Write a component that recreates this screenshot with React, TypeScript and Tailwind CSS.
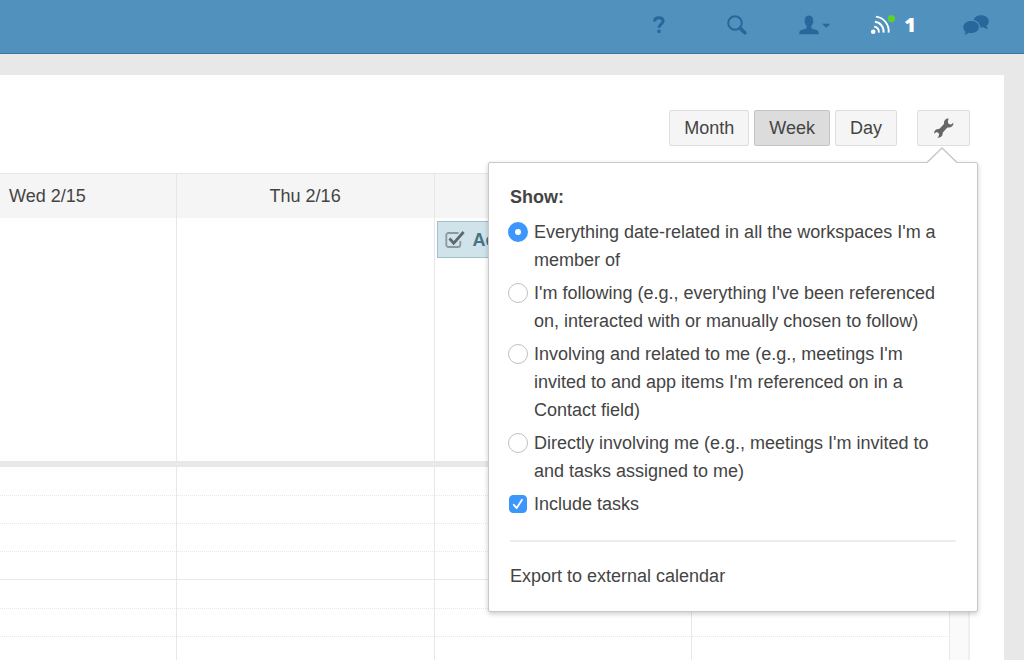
import type { ReactNode } from "react";

const days = [
  { id: "wed", label: "Wed 2/15" },
  { id: "thu", label: "Thu 2/16" },
  { id: "fri", label: "" },
  { id: "sat", label: "" },
];

const hours = [0, 1, 2];

const quarters = [0, 1, 2, 3];

const filters = [
  "Everything date-related in all the workspaces I'm a member of",
  "I'm following (e.g., everything I've been referenced on, interacted with or manually chosen to follow)",
  "Involving and related to me (e.g., meetings I'm invited to and app items I'm referenced on in a Contact field)",
  "Directly involving me (e.g., meetings I'm invited to and tasks assigned to me)",
];

function NavButton({ label, className = "", children }: { label: string; className?: string; children: ReactNode }) {
  return (
    <button aria-label={label} className={`flex w-[78px] items-center justify-center text-[#29679b] ${className}`}>
      {children}
    </button>
  );
}

function TopBar() {
  return (
    <header className="flex h-[54px] shrink-0 items-stretch justify-end border-b border-[#3a759f] bg-[#5191be] pr-[9px] pb-1">
      <NavButton label="Help">
        <svg width="14" height="18" viewBox="0 0 14 18" fill="none">
          <path d="M2.5 5.5C2.7 3 4.3 1.8 6.8 1.8c2.6 0 4.3 1.3 4.3 3.3 0 3.2-4.1 3-4.1 6.6" stroke="currentColor" strokeWidth="3" />
          <rect x="5.3" y="13.7" width="3.4" height="3.2" rx="0.8" fill="currentColor" />
        </svg>
      </NavButton>
      <NavButton label="Search">
        <svg width="20" height="20" viewBox="0 0 20 20" fill="none" stroke="currentColor">
          <circle cx="8" cy="8" r="6.8" strokeWidth="2" />
          <path d="M13.2 13.2l4.6 4.6" strokeWidth="3.6" strokeLinecap="round" />
        </svg>
      </NavButton>
      <NavButton label="Account">
        <svg width="32" height="20" viewBox="0 0 32 20" fill="currentColor">
          <path d="M9.900.5c2.600 0 4.200 1.700 4.200 4.100 0 .7-.1 1-.1 1.400.6.2.5 1.800-.3 2.300-.3 1.400-.8 2.300-1.400 2.900v1.900c.7 1.200 6.100 1.600 7 3.400.4.700.4 1.800.4 2.800H.2c0-1 0-2.100.4-2.800.9-1.800 6.300-2.200 7-3.400v-1.900c-.6-.6-1.100-1.500-1.400-2.900-.8-.5-.9-2.100-.3-2.300 0-.4-.1-.7-.1-1.400C5.800 2.200 7.300.5 9.900.5z" />
          <path d="M23 8.800h8.400l-4.200 4z" />
        </svg>
      </NavButton>
      <NavButton label="Activity, 1 new">
        <span className="flex items-center gap-2 text-white">
          <svg width="26" height="20" viewBox="0 0 26 20" fill="none">
            <circle cx="3.2" cy="16.8" r="2.3" fill="currentColor" />
            <g stroke="currentColor" strokeWidth="1.9">
              <path d="M4.2 11.8a4.8 4.8 0 0 1 4.6 5.8" />
              <path d="M4.9 6.8a9.6 9.6 0 0 1 8.6 10.8" />
              <path d="M5.9 1.6a14.5 14.5 0 0 1 12.7 16" />
            </g>
            <circle cx="21.4" cy="3.6" r="3.6" fill="#5bd12b" />
          </svg>
          <span className="font-['Open_Sans',sans-serif] text-xl leading-5 font-extrabold">1</span>
        </span>
      </NavButton>
      <NavButton label="Messages" className="ml-[5px]">
        <svg width="26" height="20" viewBox="0 0 26 20" fill="currentColor">
          <path d="M18 .3c4.500 0 7.800 2.600 7.800 6 0 1.800-.8 3.300-2.200 4.400.1 1.200.7 2.200 1.600 3-1.800 0-3.400-.5-4.600-1.500-1 .3-2.100.4-3.200.3C17 8.500 14 5.200 10.400 5 11.400 2.200 14.300.3 18 .3z" />
          <path d="M8.200 6c4.500 0 7.800 2.600 7.800 6s-3.300 6.100-7.800 6.100c-1 0-1.900-.1-2.700-.3-.9 1.100-2.200 1.800-3.900 2 .6-.9.9-2 .7-3.300C1 15.400.3 13.900.3 12.100.3 8.600 3.700 6 8.200 6z" />
        </svg>
      </NavButton>
    </header>
  );
}

function ShowMenu() {
  return (
    <div className="absolute top-[52px] -right-2 z-10 w-[490px] rounded-xs border border-[#c8c8c8] bg-white px-[21px] pt-5 pb-[21px] leading-7 shadow-[0_2px_5px_rgba(0,0,0,0.2)]">
      <svg className="absolute -top-4 right-5" width="30" height="17" viewBox="0 0 30 17">
        <path d="M0 17V16L15 1L30 16V17" fill="#fff" />
        <path d="M0 15.5L15 1L30 15.5" fill="none" stroke="#c8c8c8" strokeWidth="1.5" />
      </svg>

      <fieldset>
        <legend className="mb-[7px] font-bold">Show:</legend>
        <div className="-ml-0.5 flex flex-col gap-[5px]">
          {filters.map((text, i) => (
            <label key={text} className="flex gap-1.5">
              <span className="flex h-7 w-5 shrink-0 items-center justify-center">
                <input
                  type="radio"
                  name="show"
                  defaultChecked={i === 0}
                  className="size-5 appearance-none rounded-full border border-[#c0c0c0] bg-white checked:border-[7px] checked:border-[#3b97fc]"
                />
              </span>
              <span>{text}</span>
            </label>
          ))}
          <label className="flex gap-1.5">
            <span className="relative flex h-7 w-5 shrink-0 items-center justify-center">
              <input
                type="checkbox"
                defaultChecked
                className="peer size-[18px] appearance-none rounded-[4px] border border-[#c0c0c0] bg-white checked:border-[#3b97fc] checked:bg-[#3b97fc]"
              />
              <svg
                className="pointer-events-none absolute hidden peer-checked:block"
                width="12"
                height="12"
                viewBox="0 0 12 12"
                fill="none"
                stroke="#fff"
                strokeWidth="1.8"
                strokeLinecap="round"
                strokeLinejoin="round"
              >
                <path d="M1.8 6.8l2.9 3.3L10 1.8" />
              </svg>
            </span>
            <span>Include tasks</span>
          </label>
        </div>
      </fieldset>

      <hr className="mt-[22px] mb-5 border-t-2 border-[#ededed]" />
      <a href="#export" className="block">Export to external calendar</a>
    </div>
  );
}

function Toolbar() {
  return (
    <div className="flex h-9 justify-end gap-[5px]">
      <button className="rounded-xs border border-[#dedede] bg-[#f5f5f5] px-3.5">Month</button>
      <button className="rounded-xs border border-[#c4c4c4] bg-[#dcdcdc] px-3.5">Week</button>
      <button className="rounded-xs border border-[#dedede] bg-[#f5f5f5] px-3.5">Day</button>
      <div className="relative ml-[15px]">
        <button
          aria-label="Calendar settings"
          className="flex h-9 w-[53px] items-center justify-center rounded-xs border border-[#dedede] bg-[#f5f5f5] text-[#666]"
        >
          <svg width="20" height="20" viewBox="0 0 20 20" fill="currentColor">
            <path d="M14.6.6C12 .3 9.800 2.200 10 5.200c0 .6-.1 1-.5 1.400L6 10.300c-.4.4-.8.6-1.400.6C1.800 10.900 0 12.800 0 15.400l2.900-1.300 2.300 1.700-.5 2.500-1.300 1.300c2.800.6 5.400-1.300 5.300-4.200 0-.6.2-1 .6-1.400l3.600-3.900c.4-.4.8-.5 1.400-.5 3.100.2 5.200-1.800 5.100-4.800l-2.400 1.700-2.300-.4-.9-2.300z" />
          </svg>
        </button>
        <ShowMenu />
      </div>
    </div>
  );
}

function TaskEvent() {
  return (
    <div className="m-0.5 flex h-[37px] items-center gap-2 border border-[#9fc1ca] bg-[#d0e3ea] pl-[7px] font-bold text-[#477483]">
      <svg width="20" height="18" viewBox="0 0 20 18" fill="none">
        <path d="M13.5 2H3.5A2.2 2.2 0 0 0 1.3 4.2v9.600A2.2 2.2 0 0 0 3.5 16h9.600a2.2 2.2 0 0 0 2.2-2.2V10" stroke="#8b999e" strokeWidth="1.8" />
        <path d="M4.500 7.5l4.200 4.600L18.600 1" stroke="#5c686c" strokeWidth="2.8" />
      </svg>
      <span>Action</span>
    </div>
  );
}

function WeekGrid() {
  return (
    <div className="mt-[27px] overflow-hidden border-r-2 border-[#efefef]">
      {/* the week is scrolled, so Wednesday is cut at the left edge */}
      <table className="-ml-[81px] w-[calc(100%+81px)] table-fixed border-separate border-spacing-0">
        <thead>
          <tr className="h-[45px] bg-[#f5f5f5]">
            {days.map((day) => (
              <th key={day.id} className="border-t border-r border-[#e6e6e6] font-normal">{day.label}</th>
            ))}
            <th className="w-[18px] border-t border-[#e6e6e6]" />
          </tr>
        </thead>
        <tbody>
          <tr className="h-[243px] align-top">
            {days.map((day) => (
              <td key={day.id} className="border-r border-[#e8e8e8] pt-px">{day.id === "fri" && <TaskEvent />}</td>
            ))}
            <td />
          </tr>
          <tr className="h-1.5 bg-[#e8e8e8]">
            <td colSpan={5} />
          </tr>
          {hours.map((hour) =>
            quarters.map((quarter) => (
              <tr key={`${hour}-${quarter}`} className={quarter === 0 ? "h-[29px]" : "h-7"}>
                {days.map((day) => (
                  <td
                    key={day.id}
                    className={
                      quarter === 3
                        ? "border-r border-b border-[#e8e8e8]"
                        : "border-r border-b border-[#e8e8e8] [border-bottom-style:dotted]"
                    }
                  />
                ))}
                <td className="bg-[#fafafa]" />
              </tr>
            ))
          )}
        </tbody>
      </table>
    </div>
  );
}

export default function App() {
  return (
    <div className="flex h-screen flex-col overflow-hidden bg-[#e8e8e8] font-['Liberation_Sans',Arial,sans-serif] text-lg text-[#444]">
      <TopBar />
      <main className="mt-[21px] mr-5 min-h-0 flex-1 bg-white pt-[35px] pr-[34px]">
        <Toolbar />
        <WeekGrid />
      </main>
    </div>
  );
}
